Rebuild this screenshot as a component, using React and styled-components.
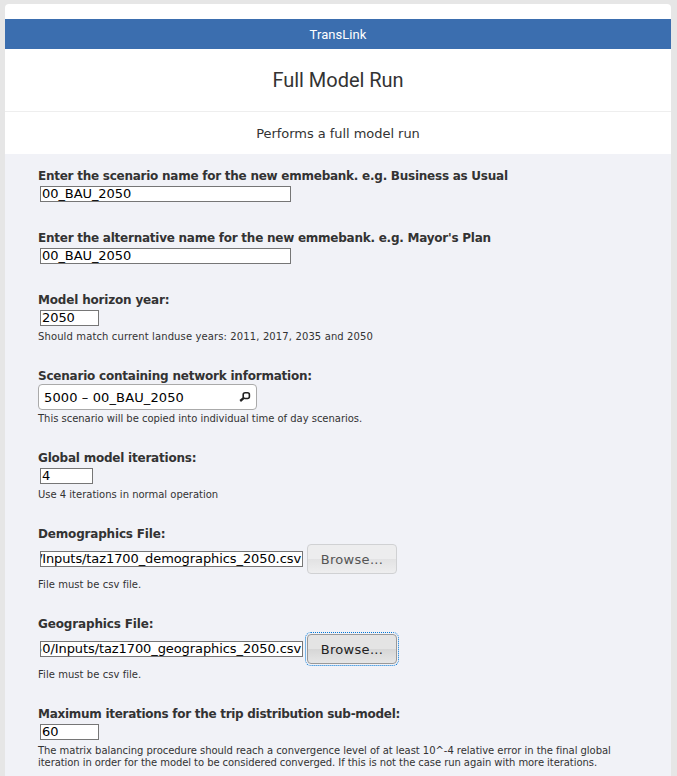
import React from "react";
import styled, { createGlobalStyle } from "styled-components";

const GlobalStyle = createGlobalStyle`
  * { box-sizing: border-box; }
  body { margin: 0; background: #e6e6e6; }
`;

const Page = styled.main`
  height: 776px;
  overflow: hidden;
  padding: 4px 6px 0 5px;
  font-family: "DejaVu Sans", Verdana, sans-serif;
  color: #333;
  white-space: nowrap;
`;

const Panel = styled.section`
  height: 772px;
  padding-top: 15px;
  background: #fff;
  border-radius: 4px 4px 0 0;
  overflow: hidden;
`;

const Banner = styled.header`
  height: 30px;
  background: #3b6eaf;
  color: #fff;
  font: 13px/31px Roboto, sans-serif;
  letter-spacing: 0.05px;
  text-align: center;
`;

const Title = styled.h1`
  height: 63px;
  margin: 0;
  border-bottom: 1px solid #eee;
  font: 400 20px/63px Roboto, sans-serif;
  letter-spacing: -0.04px;
  text-align: center;
`;

const Description = styled.p`
  height: 42px;
  margin: 0;
  font-size: 13px;
  line-height: 44px;
  letter-spacing: -0.04px;
  text-align: center;
`;

const Form = styled.form`
  display: flex;
  flex-direction: column;
  gap: 26px;
  height: 622px;
  padding: 14px 33px 0;
  background: #f1f2f7;
`;

const Field = styled.div`
  display: flex;
  flex-direction: column;
  align-items: flex-start;
`;

const Label = styled.label`
  font-size: 12px;
  font-weight: 700;
  line-height: 16px;
  letter-spacing: ${({ $spacing }) => $spacing}px;
`;

const TextBox = styled.span`
  display: flex;
  justify-content: ${({ $scrolled }) => ($scrolled ? "flex-end" : "flex-start")};
  width: ${({ $width }) => $width}px;
  height: 16px;
  margin: 2px;
  padding: 0 1px;
  border: 1px solid #767676;
  background: #fff;
  color: #000;
  font-size: 13px;
  line-height: 13px;
  letter-spacing: ${({ $spacing = -0.08 }) => $spacing}px;
  overflow: hidden;
`;

const Hint = styled.p`
  margin: 3px 0 -1px;
  font-size: 10px;
  line-height: 12px;
`;

const HintLine = styled.span`
  display: block;
  letter-spacing: ${({ $spacing }) => $spacing}px;
`;

const Select = styled.div`
  display: flex;
  align-items: center;
  justify-content: space-between;
  width: 219px;
  height: 26px;
  padding: 0 5px;
  border: 1px solid #aaa;
  border-radius: 4px;
  background: #fff;
  color: #000;
  font-size: 13px;
  letter-spacing: 0.12px;
`;

const FileRow = styled.div`
  display: flex;
  align-items: center;
  height: 34px;
`;

const Browse = styled.button`
  width: 90px;
  height: 30px;
  margin-left: 2px;
  padding: 2px 0 0;
  border: 1px solid ${({ $focused }) => ($focused ? "#999" : "#d0d1d3")};
  border-radius: 4px;
  background: ${({ $focused }) =>
    $focused
      ? "linear-gradient(#e4e4e4 0 50%, #d6d6d6 50%, #e6e6e6)"
      : "linear-gradient(#ededee 0 50%, #e2e2e3 50%, #eeeeef)"};
  color: ${({ $focused }) => ($focused ? "#222" : "#555")};
  font: 13px/26px "DejaVu Sans", Verdana, sans-serif;
  letter-spacing: 0.3px;
  outline: ${({ $focused }) => ($focused ? "1px dotted #0078d7" : "none")};
  outline-offset: 1px;
`;

const SearchIcon = () => (
  <svg width="12" height="12" viewBox="0 0 12 12" fill="none" stroke="#222">
    <rect x="4.2" y="1.7" width="6.2" height="5.8" rx="2" strokeWidth="1.6" />
    <path d="M4.6 7.2 1.2 10" strokeWidth="2.3" />
  </svg>
);

const fields = [
  { label: "Enter the scenario name for the new emmebank. e.g. Business as Usual", spacing: -0.25, value: "00_BAU_2050", width: 251 },
  { label: "Enter the alternative name for the new emmebank. e.g. Mayor's Plan", spacing: -0.245, value: "00_BAU_2050", width: 251 },
  {
    label: "Model horizon year:", spacing: -0.18, value: "2050", width: 59,
    hints: [["Should match current landuse years: 2011, 2017, 2035 and 2050", 0.12]],
  },
  {
    label: "Scenario containing network information:", spacing: -0.22, kind: "select", value: "5000 – 00_BAU_2050",
    hints: [["This scenario will be copied into individual time of day scenarios.", -0.025]],
  },
  {
    label: "Global model iterations:", spacing: -0.22, value: "4", width: 53,
    hints: [["Use 4 iterations in normal operation", -0.01]],
  },
  {
    label: "Demographics File:", spacing: -0.18, kind: "file", value: "2050/Inputs/taz1700_demographics_2050.csv", valueSpacing: -0.09,
    hints: [["File must be csv file.", 0.05]],
  },
  {
    label: "Geographics File:", spacing: -0.15, kind: "file", value: "2050/Inputs/taz1700_geographics_2050.csv", valueSpacing: -0.09, focused: true,
    hints: [["File must be csv file.", 0.05]],
  },
  {
    label: "Maximum iterations for the trip distribution sub-model:", spacing: -0.28, value: "60", width: 59,
    hints: [
      ["The matrix balancing procedure should reach a convergence level of at least 10^-4 relative error in the final global", -0.043],
      ["iteration in order for the model to be considered converged. If this is not the case run again with more iterations.", -0.069],
    ],
  },
];

function Control({ field }) {
  if (field.kind === "select") {
    return <Select>{field.value}<SearchIcon /></Select>;
  }
  if (field.kind === "file") {
    return (
      <FileRow>
        <TextBox $width={263} $spacing={field.valueSpacing} $scrolled>{field.value}</TextBox>
        <Browse type="button" $focused={field.focused}>Browse...</Browse>
      </FileRow>
    );
  }
  return <TextBox $width={field.width}>{field.value}</TextBox>;
}

export default function App() {
  return (
    <Page>
      <GlobalStyle />
      <Panel>
        <Banner>TransLink</Banner>
        <Title>Full Model Run</Title>
        <Description>Performs a full model run</Description>
        <Form>
          {fields.map((field) => (
            <Field key={field.label}>
              <Label $spacing={field.spacing}>{field.label}</Label>
              <Control field={field} />
              {field.hints && (
                <Hint>
                  {field.hints.map(([text, spacing]) => (
                    <HintLine key={text} $spacing={spacing}>{text}</HintLine>
                  ))}
                </Hint>
              )}
            </Field>
          ))}
        </Form>
      </Panel>
    </Page>
  );
}
